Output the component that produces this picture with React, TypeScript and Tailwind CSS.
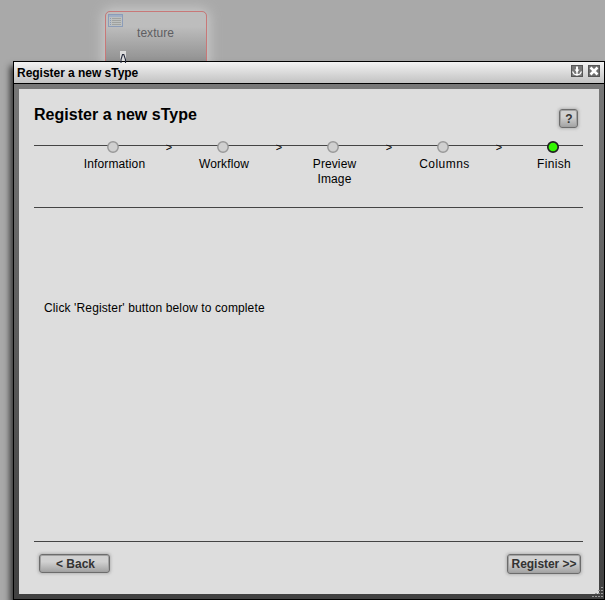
import React from 'react';

type Step = { label: string; width: string; tracking: string };

const steps: Step[] = [
  { label: 'Information', width: 'w-[70px]', tracking: 'tracking-[0.13px]' },
  { label: 'Workflow', width: 'w-[70px]', tracking: 'tracking-[0.1px]' },
  { label: 'Preview Image', width: 'w-[70px]', tracking: 'tracking-[0.1px]' },
  { label: 'Columns', width: 'w-[70px]', tracking: 'tracking-[0.45px]' },
  { label: 'Finish', width: 'w-[70px]', tracking: 'tracking-[0.3px]' },
];

const stepLabelShift = ['ml-[3px]', 'ml-[2px]', 'ml-[3px]', 'ml-[3px]', 'ml-[2px]'];

function TypeNode() {
  return (
    <div className="absolute left-[105px] top-[11px] h-[60px] w-[102px] rounded-[5px] border border-[#c87878] bg-linear-to-b from-[#bdbdbd] from-25% to-[#8e8e8e] to-90% shadow-[0_0_13px_2px_#cccccc]">
      <svg className="absolute left-[2px] top-[2px]" width="15" height="13" viewBox="0 0 15 13" shapeRendering="crispEdges">
        <rect x="0.5" y="0.5" width="14" height="12" fill="#bdc0c0" stroke="#8c9cb8" />
        <path d="M1 2H14" stroke="#a0afc5" strokeWidth="2" />
        <path d="M2 4.5H3M2 6.5H3M2 8.5H3M2 10.5H3" stroke="#8799b8" />
        <path d="M4 4.5H13M4 6.5H13M4 8.5H13M4 10.5H13" stroke="#a0a29f" />
      </svg>
      <span className="absolute left-[31px] top-[14px] text-[12px] leading-[14px] tracking-[0.05px] text-[#5e5e62]">texture</span>
    </div>
  );
}

function NodePort() {
  return (
    <svg className="absolute left-[120px] top-[51px]" width="7" height="12" viewBox="0 0 7 12">
      <rect width="6" height="10" fill="#dcdcdc" />
      <path d="M1 12V8.5L2.5 3.5H3.8L5.5 8.5V12" fill="none" stroke="#23283a" strokeWidth="1.1" />
    </svg>
  );
}

function TitleBar() {
  return (
    <div className="flex h-[22px] shrink-0 items-center justify-between border-b border-black bg-linear-to-b from-[#f3f3f3] to-[#c2c2c2] pl-[3px] pr-[4px]">
      <span className="text-[12px] font-bold leading-[20px] tracking-[-0.03px]">Register a new sType</span>
      <div className="mb-[3px] flex gap-[5px]">
        <svg width="12" height="12" viewBox="0 0 12 12">
          <rect x="0.5" y="0.5" width="11" height="11" fill="#777" stroke="#555" />
          <path d="M5 1.5H7V4.5H8.5L6 7.5L3.5 4.5H5Z" fill="#fff" />
          <path d="M1.5 6.5L3 9L6 10L9 9L10.5 6.5M6 6V10" fill="none" stroke="#fff" strokeWidth="1.3" />
        </svg>
        <svg width="12" height="12" viewBox="0 0 12 12">
          <rect x="0.5" y="0.5" width="11" height="11" fill="#6c6c6c" stroke="#555" />
          <path d="M2.5 2.5L9.5 9.5M9.5 2.5L2.5 9.5" stroke="#fff" strokeWidth="2.6" />
        </svg>
      </div>
    </div>
  );
}

function Steps() {
  return (
    <div className="mt-[15px] h-[63px] w-[549px] border-b border-[#444]">
      <div className="h-px bg-[#444]" />
      <div className="-mt-[6px] flex w-[600px] items-start pl-[44px]">
        {steps.map((step, i) => (
          <React.Fragment key={step.label}>
            {i > 0 && (
              <span className="w-[40px] pl-[2px] pt-px text-center text-[11px] leading-[12px] text-black">&gt;</span>
            )}
            <div className={`flex flex-col items-center ${step.width}`}>
              <svg width="14" height="14" viewBox="0 0 14 14">
                {i === steps.length - 1 ? (
                  <circle cx="7" cy="7" r="5.2" fill="#33f800" stroke="#222" strokeWidth="1.7" />
                ) : (
                  <circle cx="7" cy="7" r="5.2" fill="#d0d0d0" stroke="#999" strokeWidth="1.5" />
                )}
              </svg>
              <span className={`mt-[3px] text-center text-[12px] leading-[15px] ${stepLabelShift[i]} ${step.tracking}`}>
                {step.label}
              </span>
            </div>
          </React.Fragment>
        ))}
      </div>
    </div>
  );
}

const buttonStyle =
  'flex items-center justify-center rounded-[3px] border border-[#6c6c6c] bg-linear-to-b from-[#d1d1d1] from-40% to-[#a2a2a2] font-bold text-[#333] shadow-[inset_0_0_0_1px_#a2a2a2,0_0_3px_1px_#b5b5b5]';

export default function App() {
  return (
    <div className="relative flex h-[600px] w-[605px] flex-col overflow-hidden bg-[#a9a9a9] font-['Liberation_Sans',Arial,sans-serif] text-black">
      <TypeNode />
      <div className="relative ml-[13px] mt-[61px] flex h-[539px] flex-col border border-black shadow-[-3px_5px_6px_0px_#333]">
        <TitleBar />
        <div className="flex min-h-0 flex-1 bg-linear-to-b from-[#777] to-[#414141] p-[5px]">
          <main className="flex flex-1 flex-col bg-[#dddddd] px-[15px]">
            <header className="flex h-[41px] shrink-0 justify-between pr-[6px] pt-[15px]">
              <h1 className="pt-px text-[16px] font-bold leading-[20px] tracking-[0.03px]">Register a new sType</h1>
              <button className={`mt-[5px] h-[19px] w-[19px] pl-px text-[12px] ${buttonStyle}`}>?</button>
            </header>
            <Steps />
            <p className="ml-[10px] mt-[93px] text-[12px] leading-[15px] tracking-[0.13px]">
              Click 'Register' button below to complete
            </p>
            <footer className="mt-auto flex h-[53px] w-[549px] justify-between border-t border-[#444] pl-[5px] pr-[3px] pt-[12px]">
              <button className={`h-[19px] w-[71px] pl-[2px] text-[12px] ${buttonStyle}`}>&lt; Back</button>
              <button className={`-mr-px h-[20px] w-[74px] whitespace-nowrap text-[12px] tracking-[-0.05px] ${buttonStyle}`}>Register &gt;&gt;</button>
            </footer>
          </main>
        </div>
        <svg className="absolute bottom-0 right-0" width="13" height="13" viewBox="0 0 13 13">
          <path d="M10 1.5H13M7 4.5H13M4 7.5H13M1 10.5H13" stroke="#999" strokeDasharray="2 1" />
        </svg>
      </div>
      <NodePort />
    </div>
  );
}
